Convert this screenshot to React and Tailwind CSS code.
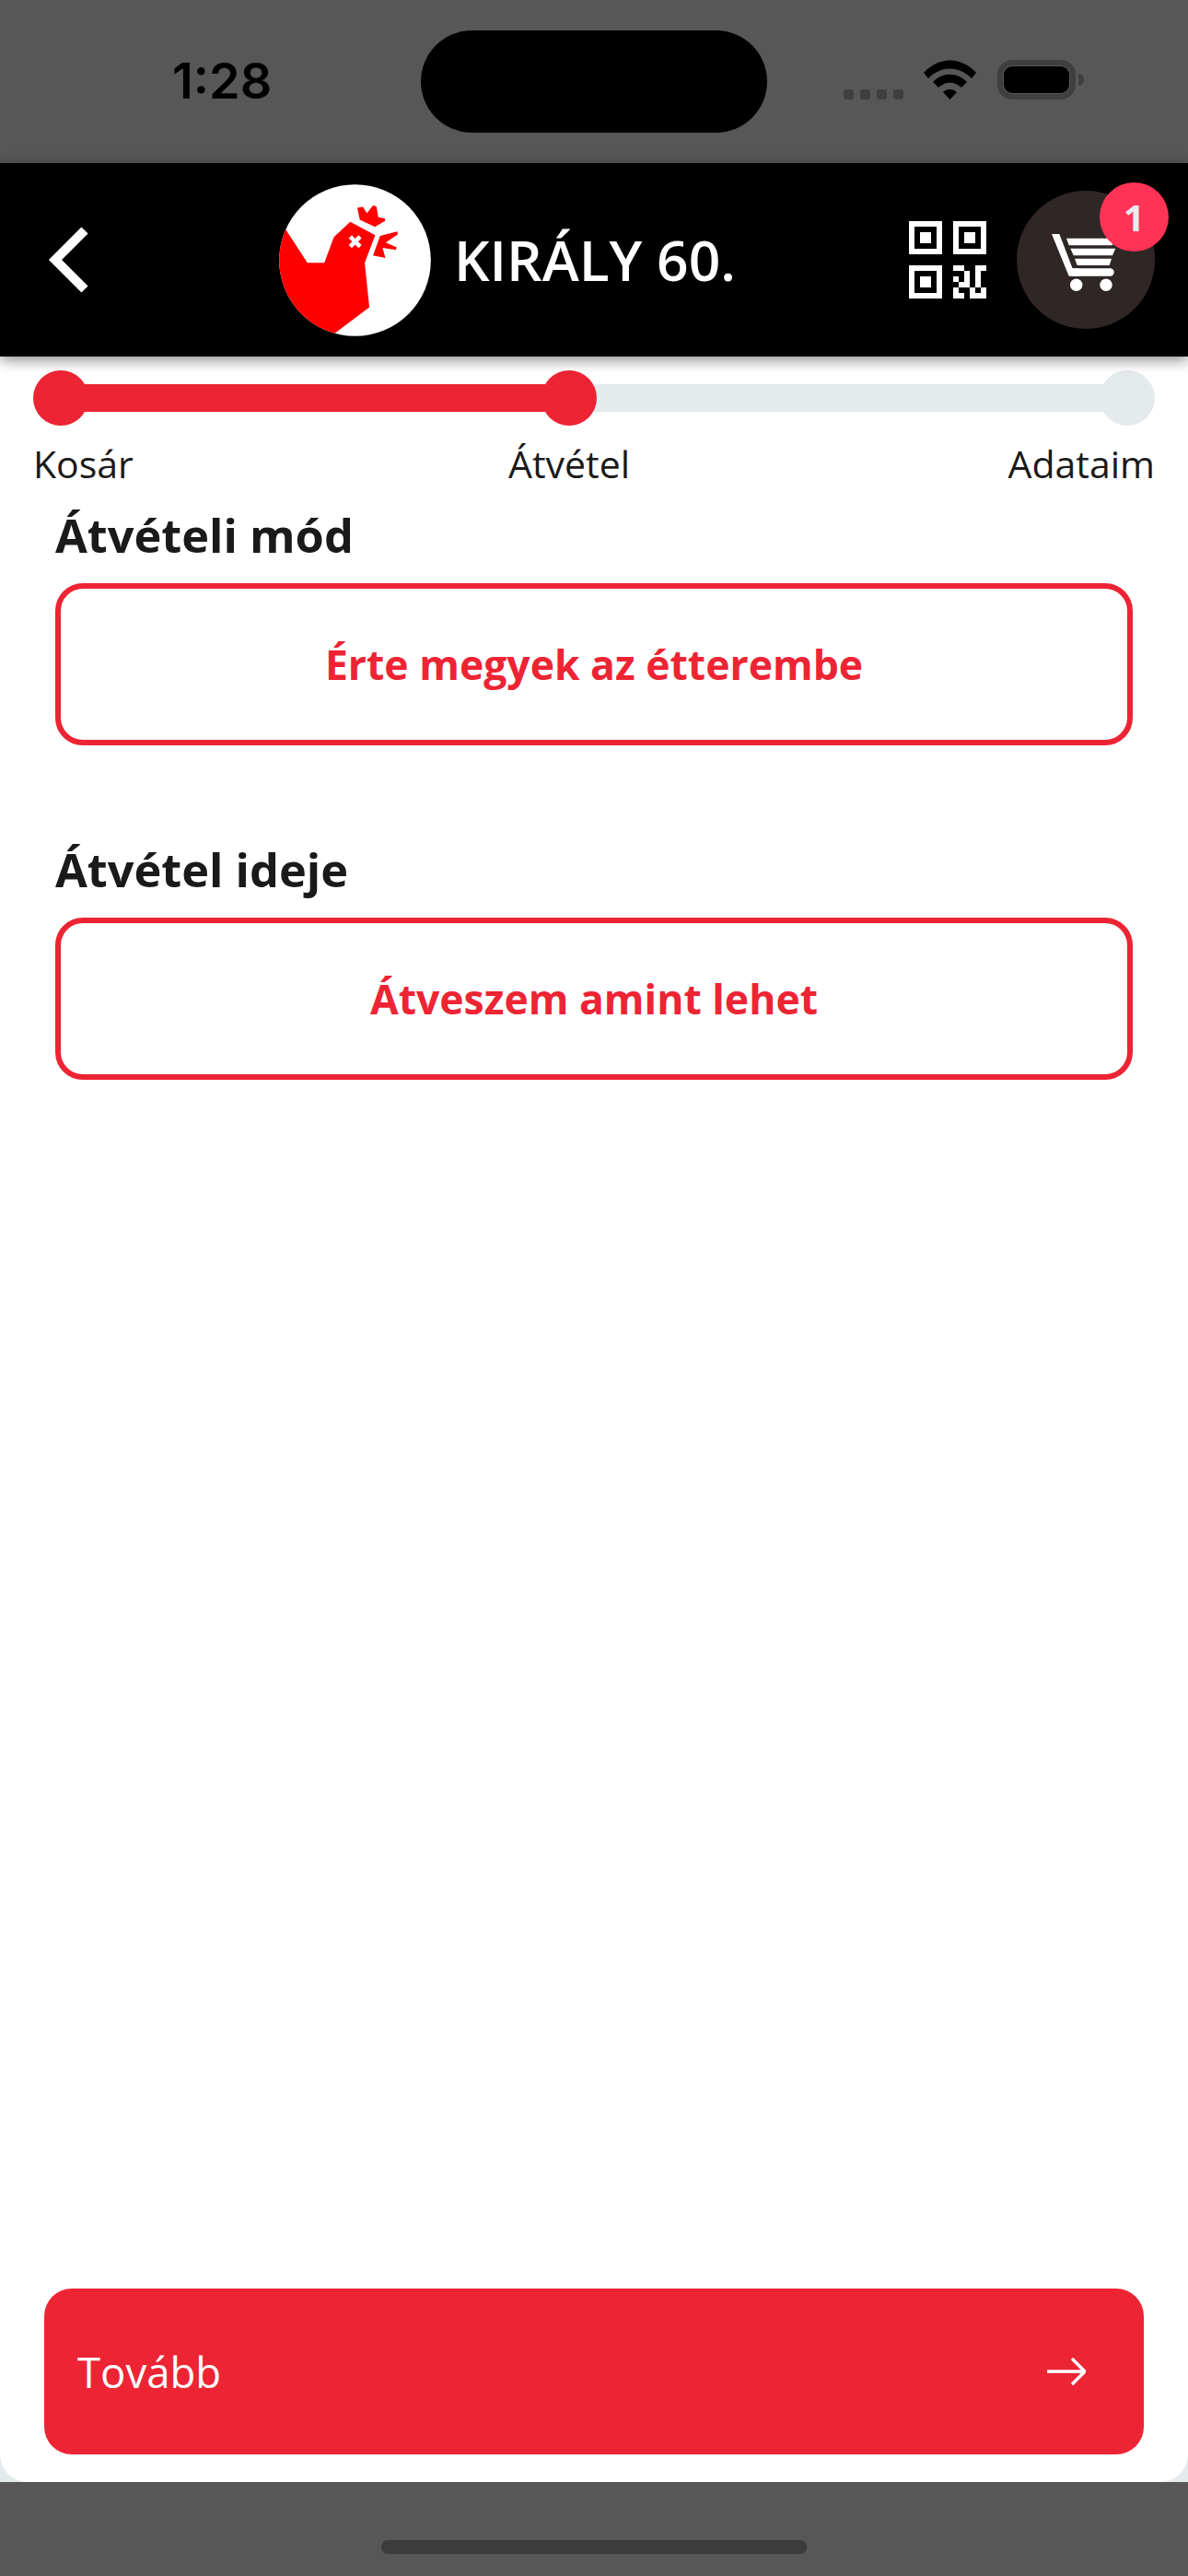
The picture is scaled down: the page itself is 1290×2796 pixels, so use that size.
import React from 'react';

const QR_CELLS = [
  [1, 1, 0, 0, 1, 1],
  [0, 0, 1, 0, 1, 0],
  [1, 0, 1, 0, 1, 0],
  [0, 1, 1, 0, 1, 0],
  [1, 0, 0, 1, 0, 1],
  [1, 1, 0, 1, 1, 1],
];

function StatusBar() {
  return (
    <div className="relative flex h-[177px] shrink-0 bg-[#575757]">
      <span className="pl-[187px] pt-[52px] text-[54px] font-semibold leading-[72px] text-black [font-family:Inter,sans-serif]">
        1:28
      </span>
      <div className="absolute left-[457px] top-[33px] h-[111px] w-[376px] rounded-full bg-black" />
      <div className="absolute left-[916px] top-[65px] flex h-[43px] items-end">
        <div className="flex gap-[7px]">
          {[0, 1, 2, 3].map((i) => (
            <div key={i} className="h-[11px] w-[11px] rounded-[3px] bg-[#3f3f3f]" />
          ))}
        </div>
        <svg className="ml-[22px]" width="57" height="43" viewBox="0 0 57 43">
          <path d="M0 14C16-4 41-4 57 14L52 20C38 6 19 6 5 20Z" fill="#000" />
          <path d="M10 24C20 13 37 13 47 24L41 30C33 23 24 23 16 30Z" fill="#000" />
          <path d="M21 35C25 31 32 31 36 35L28.500 43Z" fill="#000" />
        </svg>
        <div className="ml-[23px] flex h-[43px] w-[85px] items-center justify-center rounded-[16px] border-[6px] border-[#3f3f3f]">
          <div className="h-[29px] w-[71px] rounded-[9px] bg-black" />
        </div>
        <div className="mb-[15px] ml-[3px] h-[13px] w-[6px] rounded-r-full bg-[#3f3f3f]" />
      </div>
    </div>
  );
}

function Logo() {
  return (
    <svg width="165" height="165" viewBox="100 62 493 491">
      <defs>
        <clipPath id="logo-clip">
          <circle cx="346.500" cy="307.500" r="246" />
        </clipPath>
      </defs>
      <circle cx="346.500" cy="307.500" r="246" fill="#fff" />
      <g clipPath="url(#logo-clip)" fill="#ff0000">
        <polygon points="122,208 192,316 247,316 278,232 331,183 412,226 378,316 393,460 280,545 280,560 60,560 60,208" />
      </g>
      <polygon
        points="354,137 372,134 385,155 405,130 416,133 422,168 444,172 444,180 411,199 362,176"
        fill="#ff0000"
      />
      <polygon
        points="428,228 484,214 485,224 446,250 482,266 479,274 436,267 445,300 405,292"
        fill="#ff0000"
      />
      <path d="M331 231L363 263M363 231L331 263" stroke="#fff" strokeWidth="14" />
    </svg>
  );
}

function QrIcon() {
  const finder = (x, y) => (
    <g key={`${x}-${y}`}>
      <rect x={x + 3} y={y + 3} width="30" height="30" fill="none" stroke="#fff" strokeWidth="6" />
      <rect x={x + 12} y={y + 12} width="12" height="12" fill="#fff" />
    </g>
  );
  return (
    <svg width="84" height="84" viewBox="0 0 84 84" shapeRendering="crispEdges">
      {finder(0, 0)}
      {finder(48, 0)}
      {finder(0, 48)}
      {QR_CELLS.map((row, r) =>
        row.map((on, c) =>
          on ? <rect key={`${r}-${c}`} x={48 + c * 6} y={48 + r * 6} width="6" height="6" fill="#fff" /> : null
        )
      )}
    </svg>
  );
}

function CartIcon() {
  return (
    <svg width="70" height="63" viewBox="0 0 70 63" fill="#fff">
      <polygon points="0,0 8.300,0 22.600,37.300 30,37.300 30,45.700 18.700,45.700" />
      <path d="M22 37.300H63.500a4.200 4.200 0 0 1 0 8.400H22Z" />
      <polygon points="16,4.700 67.700,4.700 66,12.300 18.700,12.300" />
      <polygon points="20.300,15.700 69.300,15.700 66,23.300 23.700,23.300" />
      <polygon points="25,26.700 65,26.700 62.700,34 27.700,34" />
      <circle cx="26.700" cy="55.300" r="6.700" />
      <circle cx="59" cy="55.300" r="6.700" />
    </svg>
  );
}

function Header() {
  return (
    <div className="relative z-10 flex h-[210px] shrink-0 items-center bg-black shadow-[0_4px_14px_rgba(0,0,0,0.45)]">
      <svg className="ml-[50px]" width="50" height="72" viewBox="0 0 50 72" fill="none">
        <polyline points="42,4 10,36 42,68" stroke="#fff" strokeWidth="10" />
      </svg>
      <div className="ml-[203px]">
        <Logo />
      </div>
      <span className="ml-[25px] text-[60.500px] font-semibold text-white [font-family:'Open_Sans',sans-serif]">
        KIRÁLY 60.
      </span>
      <div className="ml-auto mr-[219px]">
        <QrIcon />
      </div>
      <div className="absolute left-[1104px] top-[30px] flex h-[150px] w-[150px] items-center justify-center rounded-full bg-[#2e2725] pr-[4px] pt-[7px]">
        <CartIcon />
      </div>
      <div className="absolute left-[1194px] top-[21px] flex h-[75px] w-[75px] items-center justify-center rounded-full bg-[#ff3355] text-[40px] font-bold text-[#e8ecee] [font-family:'Open_Sans',sans-serif]">
        1
      </div>
    </div>
  );
}

function Stepper() {
  return (
    <div className="mt-[15px] px-[36px]">
      <div className="relative h-[60px]">
        <div className="absolute left-[30px] right-[30px] top-[15px] h-[30px] bg-[#e5eaec]" />
        <div className="absolute left-[30px] top-[15px] h-[30px] w-[552px] bg-[#ed2433]" />
        <div className="absolute left-0 top-0 h-[60px] w-[60px] rounded-full bg-[#ed2433]" />
        <div className="absolute left-[552px] top-0 h-[60px] w-[60px] rounded-full bg-[#ed2433]" />
        <div className="absolute right-0 top-0 h-[60px] w-[60px] rounded-full bg-[#e5eaec]" />
      </div>
      <div className="relative mt-[13px] flex h-[56px] justify-between text-[41px] leading-[56px] text-[#1a1a1a] [font-family:'Open_Sans',sans-serif]">
        <span>Kosár</span>
        <span className="absolute left-[582px] -translate-x-1/2">Átvétel</span>
        <span>Adataim</span>
      </div>
    </div>
  );
}

function Option({ title, value }) {
  return (
    <div>
      <h2 className="text-[50.500px] font-bold leading-[72px] text-[#1a1a1a] [font-family:'Open_Sans',sans-serif]">
        {title}
      </h2>
      <div className="mt-[16px] flex h-[176px] items-center justify-center rounded-[30px] border-[6px] border-[#ed2433] text-[44.500px] font-bold text-[#ed2433] [font-family:'Open_Sans',sans-serif]">
        {value}
      </div>
    </div>
  );
}

export default function App() {
  return (
    <div className="flex h-[2796px] w-[1290px] flex-col overflow-hidden bg-[#575757]">
      <StatusBar />
      <Header />
      <div className="flex h-[2307px] shrink-0 flex-col bg-[#e5eaec]">
        <div className="flex flex-1 flex-col rounded-b-[30px] bg-white">
          <Stepper />
          <div className="flex flex-col gap-[99px] px-[60px] pt-[14px]">
            <Option title="Átvételi mód" value="Érte megyek az étterembe" />
            <Option title="Átvétel ideje" value="Átveszem amint lehet" />
          </div>
          <div className="mx-[48px] mb-[30px] mt-auto flex h-[180px] items-center justify-between rounded-[30px] bg-[#ed2433] pl-[36px] pr-[63px]">
            <span className="text-[45.500px] text-white [font-family:'Open_Sans',sans-serif]">Tovább</span>
            <svg width="42" height="30" viewBox="0 0 42 30" fill="none" stroke="#fff" strokeWidth="3.500">
              <path d="M0 15H40M27 1L41 15L27 29" />
            </svg>
          </div>
        </div>
      </div>
      <div className="flex flex-1 justify-center pt-[63px]">
        <div className="h-[15px] w-[462px] rounded-[7px] bg-[#3c3c3c]" />
      </div>
    </div>
  );
}
